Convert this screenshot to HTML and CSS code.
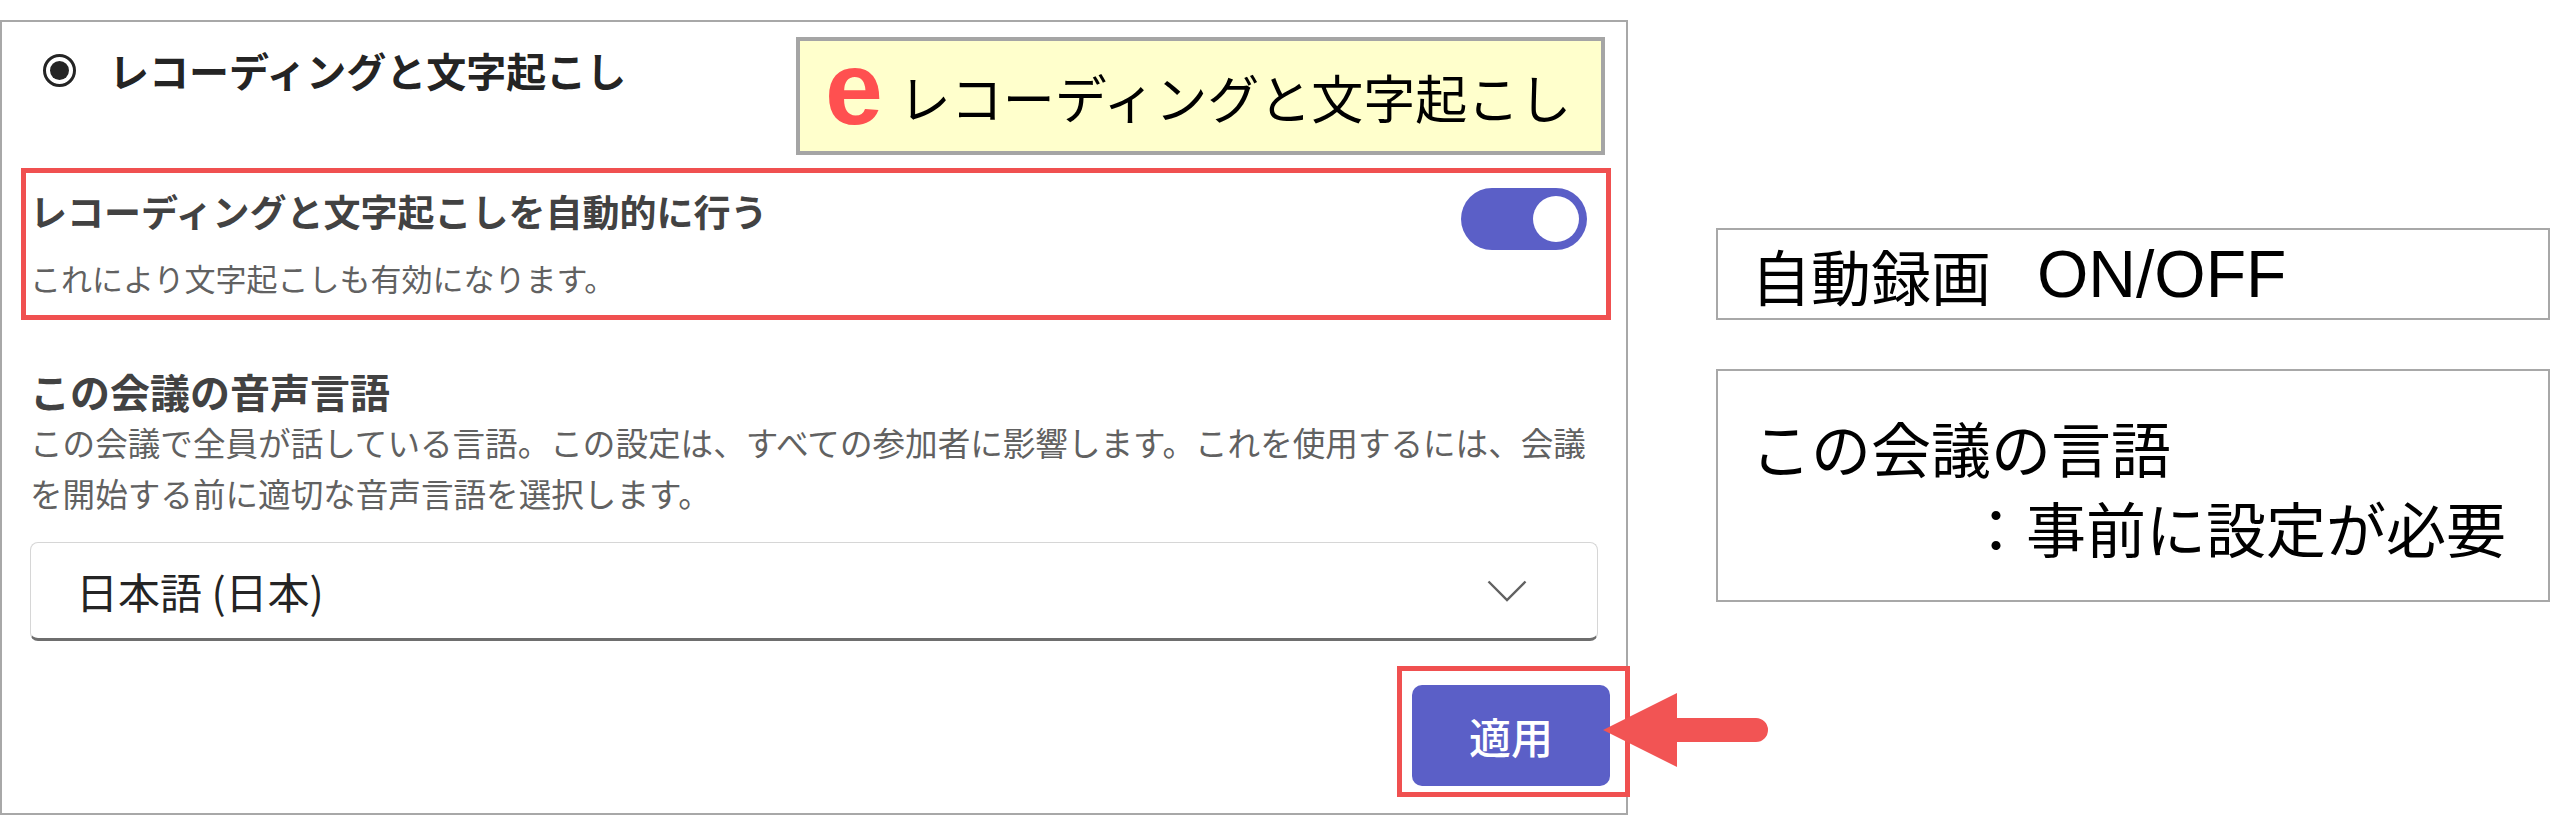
FILE: index.html
```html
<!DOCTYPE html>
<html lang="ja">
<head>
    <meta charset="UTF-8">
    <meta name="viewport" content="width=device-width, initial-scale=1.0">
    <title>レコーディングと文字起こし</title>
    <link rel="stylesheet" href="styles.css">
</head>
<body>

    <div class="slide">
        <!-- 設定パネル -->
        <div class="panel">
            <div class="option">
                <span class="radio"></span>
                <span class="option-label">レコーディングと文字起こし</span>
            </div>

            <div class="setting">
                <div class="setting-text">
                    <div class="setting-title">レコーディングと文字起こしを自動的に行う</div>
                    <div class="setting-desc">これにより文字起こしも有効になります。</div>
                </div>
                <span class="toggle"><span class="toggle-thumb"></span></span>
            </div>

            <div class="section-title">この会議の音声言語</div>
            <div class="section-desc">この会議で全員が話している言語。この設定は、すべての参加者に影響します。これを使用するには、会議<br>を開始する前に適切な音声言語を選択します。</div>

            <div class="select">
                <span>日本語 (日本)</span>
                <svg class="chevron" viewBox="0 0 40 22" width="40" height="22">
                    <path d="M1.5 1.5 L20 20 L38.5 1.5" fill="none" stroke="#616161" stroke-width="2.4"/>
                </svg>
            </div>

            <div class="actions">
                <button class="apply">適用</button>
            </div>
        </div>

        <!-- 説明メモ -->
        <div class="notes">
            <div class="note note-short">自動録画<span class="latin">ON/OFF</span></div>
            <div class="note note-tall">
                <div>この会議の言語</div>
                <div class="indent">：事前に設定が必要</div>
            </div>
        </div>

        <!-- 注釈 -->
        <div class="label"><span class="label-mark">e</span><span class="label-text">レコーディングと文字起こし</span></div>
        <div class="highlight highlight-setting"></div>
        <div class="highlight highlight-apply"></div>
        <svg class="arrow" viewBox="0 0 172 80" width="172" height="80">
            <path d="M3 40 L77 3 L77 28 L156 28 A12 12 0 0 1 156 52 L77 52 L77 77 Z" fill="#f25454"/>
        </svg>
    </div>

</body>
</html>
```

FILE: styles.css
```css
body {
    margin: 0;
    background-color: #fff;
    font-family: "Noto Sans CJK JP", "Noto Sans", sans-serif;
    color: #242424;
}

.slide {
    position: relative;
    display: flex;
    align-items: flex-start;
    gap: 88px;
    padding-top: 20px;
}

.panel {
    box-sizing: border-box;
    width: 1628px;
    height: 795px;
    flex-shrink: 0;
    border: 2px solid #a8a8a8;
    padding: 0 28px;
}

.option {
    display: flex;
    align-items: center;
    margin-top: 23px;
    height: 50px;
}

.radio {
    box-sizing: border-box;
    width: 33px;
    height: 33px;
    margin-left: 13px;
    margin-right: 33px;
    border: 3px solid #242424;
    border-radius: 50%;
    display: flex;
    align-items: center;
    justify-content: center;
}

.radio::after {
    content: "";
    width: 19px;
    height: 19px;
    border-radius: 50%;
    background-color: #242424;
}

.option-label {
    font-size: 40px;
    font-weight: 700;
    line-height: 50px;
}

.setting {
    display: flex;
    justify-content: space-between;
    align-items: flex-start;
    margin-top: 94px;
}

.setting-title {
    font-size: 37px;
    font-weight: 700;
    line-height: 44px;
    color: #424242;
}

.setting-desc {
    margin-top: 23px;
    font-size: 31px;
    line-height: 44px;
    color: #616161;
}

.toggle {
    box-sizing: border-box;
    width: 126px;
    height: 62px;
    margin-top: -1px;
    margin-right: 11px;
    padding-right: 8px;
    border-radius: 31px;
    background-color: #5b5fc7;
    display: flex;
    align-items: center;
    justify-content: flex-end;
}

.toggle-thumb {
    width: 46px;
    height: 46px;
    border-radius: 50%;
    background-color: #fff;
}

.section-title {
    margin-top: 66px;
    font-size: 40px;
    font-weight: 700;
    line-height: 50px;
    color: #424242;
}

.section-desc {
    font-size: 32.6px;
    line-height: 51px;
    color: #616161;
    white-space: nowrap;
}

.select {
    box-sizing: border-box;
    height: 99px;
    margin-top: 24px;
    padding: 0 70px 0 45px;
    border: 1px solid #d6d6d6;
    border-bottom: 3px solid #6e6e6e;
    border-radius: 8px;
    display: flex;
    align-items: center;
    justify-content: space-between;
    font-size: 42px;
    color: #242424;
}

.actions {
    display: flex;
    justify-content: flex-end;
    margin-top: 44px;
    margin-right: -12px;
}

.apply {
    width: 198px;
    height: 101px;
    border: none;
    border-radius: 10px;
    background-color: #5b5fc7;
    color: #fff;
    font-family: inherit;
    font-size: 42px;
    font-weight: 500;
}

.notes {
    display: flex;
    flex-direction: column;
    gap: 49px;
    width: 834px;
    padding-top: 208px;
}

.note {
    box-sizing: border-box;
    border: 2px solid #a8a8a8;
    padding-left: 33px;
    font-size: 60px;
    color: #000;
}

.note-short {
    display: flex;
    align-items: center;
    height: 92px;
}

.note-tall {
    display: flex;
    flex-direction: column;
    justify-content: center;
    height: 233px;
    line-height: 80px;
    padding-top: 3px;
}

.latin {
    margin-left: 46px;
    font-family: "Liberation Sans", Arial, sans-serif;
    font-size: 66px;
}

.indent {
    margin-left: 215px;
}

/* 注釈の重ね表示 */
.label {
    position: absolute;
    left: 796px;
    top: 37px;
    box-sizing: border-box;
    width: 809px;
    height: 118px;
    border: 4px solid #a5a5a5;
    background-color: #ffffcc;
    padding-left: 25px;
    display: flex;
    align-items: center;
}

.label-mark {
    font-family: "Liberation Sans", Arial, sans-serif;
    font-size: 104px;
    font-weight: 700;
    line-height: 1;
    color: #ff5050;
    margin-top: -16px;
}

.label-text {
    margin-left: 16px;
    font-size: 52px;
    color: #000;
}

.highlight {
    position: absolute;
    box-sizing: border-box;
    border: 5px solid #f05050;
}

.highlight-setting {
    left: 21px;
    top: 168px;
    width: 1590px;
    height: 152px;
}

.highlight-apply {
    left: 1397px;
    top: 666px;
    width: 233px;
    height: 131px;
}

.arrow {
    position: absolute;
    left: 1600px;
    top: 690px;
}
```
